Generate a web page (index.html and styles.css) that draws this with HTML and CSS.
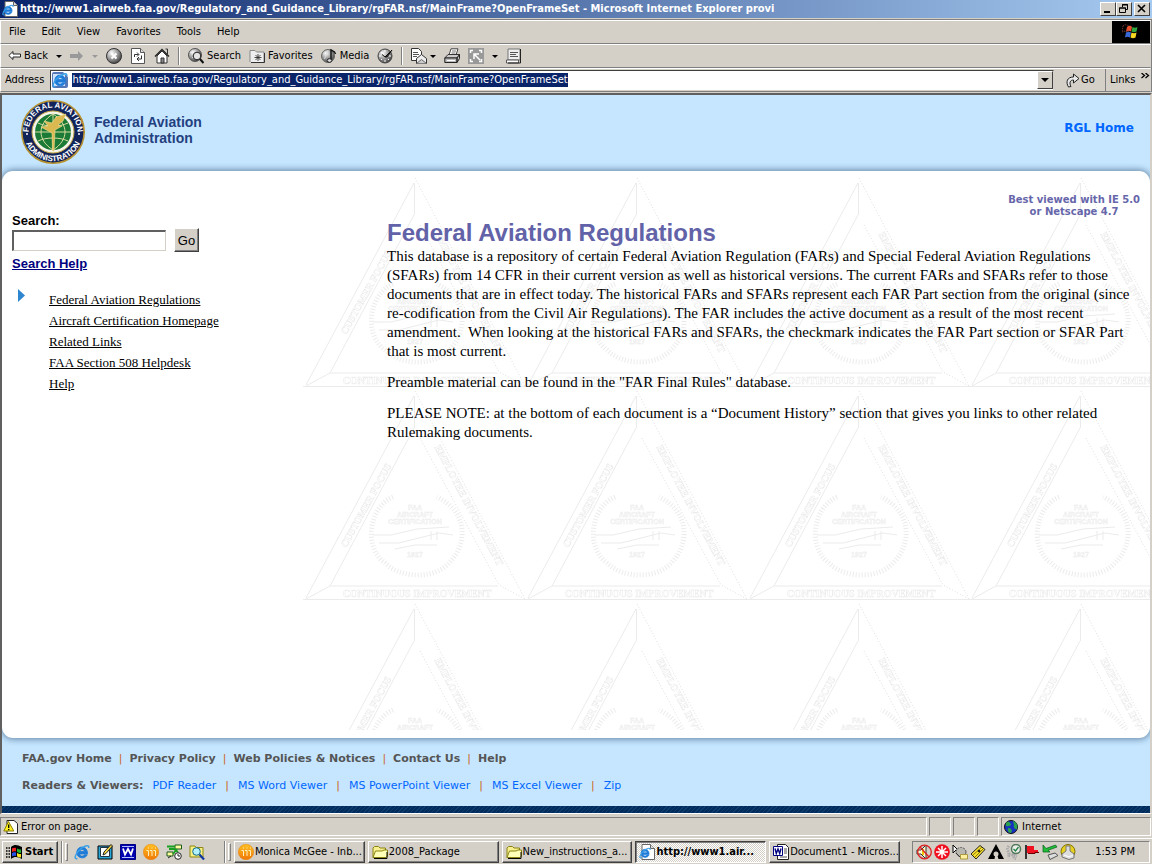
FILE: index.html
```html
<!DOCTYPE html>
<html lang="en">
<head>
<meta charset="utf-8">
<title>Federal Aviation Regulations</title>
<link rel="stylesheet" href="styles.css">
</head>
<body>
<svg class="defs" width="0" height="0" aria-hidden="true">
  <defs>
    <radialGradient id="ball" cx=".35" cy=".3" r=".8"><stop offset="0" stop-color="#fff"/><stop offset=".5" stop-color="#999"/><stop offset="1" stop-color="#333"/></radialGradient>
    <linearGradient id="orange" x2="0" y2="1"><stop offset="0" stop-color="#ffc020"/><stop offset="1" stop-color="#f07808"/></linearGradient>
    <symbol id="ie" viewBox="0 0 16 16">
      <path d="M13.500 10H5.800c.3 2.600 3.600 2.600 4.600.8h2.800c-1.600 4.600-10.400 4.200-10.400-2.300 0-7.500 11.200-7.500 10.700 1.500zM5.800 7.500h4.800c-.3-2.500-4.500-2.500-4.800 0z" fill="#1e7cd8" stroke="#1e7cd8" stroke-width=".8"/>
      <path d="M3.500 14.500C-.5 15.500 1 10.500 5 6.500 9 2.500 15.500-.5 14.800 4" fill="none" stroke="#3aa0e8" stroke-width="1.500"/>
    </symbol>
    <symbol id="iepage" viewBox="0 0 16 16">
      <path d="M3 .5h8.500l4 4v11H3z" fill="#fff" stroke="#666"/><path d="M11.500.5v4h4" fill="#ddd" stroke="#666"/>
      <use href="#ie" x="0" y="3" width="12" height="12"/>
    </symbol>
    <symbol id="folder" viewBox="0 0 16 16">
      <path d="M1 13.500V4l1.500-1.500h4L8 4h5.500v2.500" fill="#f8f090" stroke="#8a8410"/>
      <path d="M1 13.500 3.500 7H10l2-1h3.500v6l-1.500 1.500z" fill="#ffffb8" stroke="#8a8410"/><path d="M2 14.500h13V8" fill="none" stroke="#000"/>
    </symbol>
    <symbol id="word" viewBox="0 0 16 16">
      <path d="M4.500.5h8l3 3v12h-11z" fill="#fff" stroke="#222"/><path d="M11 5h3M11 7h3M11 9h3M7 13h7" stroke="#555"/>
      <path d="M.5 2.500h9v9h-9z" fill="#fff" stroke="#000080"/><path d="m2 4.500 1.300 5L5 5l1.700 4.500L8 4.500" fill="none" stroke="#000080" stroke-width="1.400"/>
    </symbol>
    <symbol id="mail" viewBox="0 0 16 16">
      <circle cx="8" cy="8" r="7.700" fill="url(#orange)" stroke="#e88000" stroke-width=".5"/>
      <path d="M3.500 6.500h2V12M7 6.500h2V12M10.500 6.500h2V12" fill="none" stroke="#fff0c0" stroke-width="1"/><path d="M5 4h1M8.500 4h1M12 4h1" stroke="#fff0c0"/>
    </symbol>
    <symbol id="flag" viewBox="0 0 18 18">
      <path d="M1 3c2-2 4-1 6 0l-1 6c-2-1-4-1-6 0z" fill="none" stroke="#844" stroke-dasharray="1 1"/>
      <path d="M5 4c2-2 4-1 5 0l-1 4.500c-2-1-3-1-5 0z" fill="#e85030"/><path d="M10.500 4c2 1 3 1 5 0l-1 4.500c-2 1-3 1-5 0z" fill="#30a840"/>
      <path d="M4 9.500c2-1 3-1 5 0l-1 5c-2-1-3-1-5 0z" fill="#3868d8"/><path d="M9.500 9.500c2 1 3 1 5 0l-1 5c-2 1-3 1-5 0z" fill="#f8d820"/>
    </symbol>
    <symbol id="caret" viewBox="0 0 6 3"><path d="M0 0h6L3 3z" fill="currentColor"/></symbol>
  </defs>
</svg>

<div class="window">
  <header class="titlebar">
    <svg class="ic16"><use href="#iepage"/></svg>
    <span class="title">http://www1.airweb.faa.gov/Regulatory_and_Guidance_Library/rgFAR.nsf/MainFrame?OpenFrameSet - Microsoft Internet Explorer provi</span>
    <button class="cap" aria-label="Minimize"><svg width="10" height="10"><path d="M1 8h6" stroke="#000" stroke-width="2"/></svg></button>
    <button class="cap" aria-label="Restore"><svg width="10" height="10"><path d="M3.500 3V.5h5v5H7M3 1h6M.5 4v4.500h6V4zM0 4h7" fill="none" stroke="#000"/></svg></button>
    <button class="cap close" aria-label="Close"><svg width="10" height="10"><path d="m1 1 7 7M8 1 1 8" stroke="#000" stroke-width="1.600"/></svg></button>
  </header>

  <div class="chrome">
    <div class="menurow">
      <nav class="menu"><button>File</button><button>Edit</button><button>View</button><button>Favorites</button><button>Tools</button><button>Help</button></nav>
      <div class="throbber"><svg width="18" height="18"><use href="#flag"/></svg></div>
    </div>

    <div class="toolbar">
      <button><svg width="13" height="12" viewBox="0 0 13 12"><path d="M.8 5.500 5 1.500v2.500h7.500v3H5v2.500z" fill="#fff" stroke="#222"/></svg><span>Back</span></button>
      <button class="drop" aria-label="Back history"><svg width="6" height="3"><use href="#caret"/></svg></button>
      <button aria-label="Forward" class="off"><svg width="14" height="12" viewBox="0 0 14 12"><path d="M13 6 8 1v3H0v4h8v3z" fill="#999"/></svg></button>
      <button class="drop off" aria-label="Forward history"><svg width="6" height="3"><use href="#caret"/></svg></button>
      <button aria-label="Stop"><svg class="ic16" viewBox="0 0 16 16"><circle cx="8" cy="8" r="7.500" fill="url(#ball)" stroke="#333"/><path d="m5.500 5.500 5 5m0-5-5 5" stroke="#fff" stroke-width="2"/></svg></button>
      <button aria-label="Refresh"><svg class="ic16" viewBox="0 0 16 16"><path d="M1.500.5h9l4 4v11h-13z" fill="#fff" stroke="#555"/><path d="M10.500.5v4h4" fill="#ddd" stroke="#555"/><path d="M4.500 9V6.500h4M7 4.500l2 2-2 2M11.500 7.500V11h-4M9 9l-2 2 2 2" fill="none" stroke="#333"/></svg></button>
      <button aria-label="Home"><svg class="ic16" viewBox="0 0 16 16"><path d="M3 8v7h10V8L8 3z" fill="#fff" stroke="#333"/><path d="M1 8.500 8 1.500l7 7" fill="none" stroke="#222" stroke-width="1.400"/><path d="M11.500 1h2v5" fill="none" stroke="#333"/><path d="M7 10h3v5H7z" fill="#888" stroke="#333"/></svg></button>
      <i class="sep"></i>
      <button><svg class="ic16" viewBox="0 0 16 16"><circle cx="7" cy="7" r="6.500" fill="url(#ball)" stroke="#555"/><path d="M2 4c3 2 4 0 5 2s-2 3-3 4" stroke="#eee" fill="none"/><circle cx="9" cy="8" r="3.800" fill="#e4e4e4" stroke="#222"/><path d="m12 11 3.500 4" stroke="#111" stroke-width="2"/></svg><span>Search</span></button>
      <button><svg class="ic16" viewBox="0 0 16 16"><path d="M1 14V2.500h5L7.500 4H15v10" fill="#eee" stroke="#888"/><path d="M2 14.500h13.500V5" fill="none" stroke="#333"/><path d="M9 6v7M5.500 9.500h7M6.500 7l5 5m0-5-5 5" stroke="#333" stroke-width=".9"/></svg><span>Favorites</span></button>
      <button><svg class="ic16" viewBox="0 0 16 16"><circle cx="7" cy="8" r="6.500" fill="url(#ball)" stroke="#666"/><path d="M2 5c3 2 3 4 1 6M7 2c0 3-2 3-1 5" stroke="#ddd" fill="none"/><path d="M10 12V2c2 1 4 1 4.500 4" fill="none" stroke="#111" stroke-width="1.400"/><ellipse cx="8.500" cy="12.500" rx="2.300" ry="1.800" fill="#ddd" stroke="#222"/></svg><span>Media</span></button>
      <button aria-label="History"><svg class="ic16" viewBox="0 0 16 16"><circle cx="8" cy="8" r="7" fill="url(#ball)" stroke="#444"/><path d="M8 2v2M8 12v2M2 8h2M12 8h2M4 4l1 1M4 12l1-1M12 12l-1-1" stroke="#fff"/><path d="M8 9 5 6.500M8 9l7-7-5 7z" stroke="#111" fill="#444"/></svg></button>
      <i class="sep"></i>
      <button aria-label="Mail"><svg class="ic16" viewBox="0 0 16 16"><path d="M.5.5h7l3 3v9H.5z" fill="#fff" stroke="#333"/><path d="M2 4.500h5M2 6.500h6M2 8.500h4" stroke="#555"/><path d="m5.500 10.500 5-4 5 4v5h-10z" fill="#eee" stroke="#333"/><path d="m5.500 15.500 5-4 5 4" fill="#ccc" stroke="#666"/></svg><svg width="6" height="3"><use href="#caret"/></svg></button>
      <button aria-label="Print"><svg class="ic16" viewBox="0 0 16 16"><path d="M5 7 7 .8h7L12 7" fill="#fff" stroke="#444"/><path d="M8 3h4M7.500 5h4" stroke="#777"/><path d="M.8 10 4 6.500h11.500L13 10z" fill="#ccc" stroke="#333"/><path d="M.8 10H13v4.500H.8zM13 10l2.500-3.500v4L13 14.500z" fill="#bbb" stroke="#222"/><path d="M3 12.500h8" stroke="#fff"/></svg></button>
      <button aria-label="Edit" class="off"><svg class="ic16" viewBox="0 0 16 16"><path d="M0 0h16v16H0z" fill="#999"/><path d="M2.500 5V2.500H5M11 2.500h2.500V5M13.500 11v2.500H11M5 13.500H2.500V11M6 11V6h5M6 6l6 6" fill="none" stroke="#fff" stroke-width="1.500"/></svg></button>
      <button class="drop" aria-label="Edit options"><svg width="6" height="3"><use href="#caret"/></svg></button>
      <button aria-label="Discuss"><svg class="ic16" viewBox="0 0 16 16"><path d="M2 1h12v11H2z" fill="#eee" stroke="#777"/><path d="M.5 12h12v3H.5z" fill="#fff" stroke="#555"/><path d="M14.500 1v14H2" fill="none" stroke="#222"/><path d="M4 4.500h8M4 6.500h6M4 8.500h8" stroke="#555"/></svg></button>
    </div>

    <form class="address">
      <label for="url">Address</label>
      <div class="combo">
        <svg class="ic16"><rect width="16" height="16" rx="2" fill="#5478b8"/><path d="M11 0h5v5z" fill="#fff"/><rect x="1" y="2" width="12" height="12" fill="#cfe2f8"/><use href="#ie"/></svg>
        <input id="url" type="text" value="http://www1.airweb.faa.gov/Regulatory_and_Guidance_Library/rgFAR.nsf/MainFrame?OpenFrameSet">
        <button type="button" class="combo-btn" aria-label="Show history"><svg width="8" height="4"><use href="#caret"/></svg></button>
      </div>
      <button type="button" class="go"><svg width="14" height="15" viewBox="0 0 14 15"><path d="M2.500 14C-.5 9 1 4 7.500 4V1L13 5.500 7.500 10V7C4 7 3 10 5 13.500z" fill="#e8e8e8" stroke="#222"/></svg>Go</button>
      <button type="button" class="links">Links<svg width="9" height="6"><path d="m.5 0 3 2.500-3 2.500M4.500 0l3 2.500-3 2.500" fill="none" stroke="#000" stroke-width="1.300"/></svg></button>
    </form>
  </div>

  <div class="page">
    <div class="banner">
      <svg class="seal" viewBox="0 0 64 64" role="img" aria-label="Federal Aviation Administration seal">
        <circle cx="32" cy="32" r="31.200" fill="#12235a" stroke="#b8922e" stroke-width="1.600"/>
        <circle cx="32" cy="32" r="21" fill="#f4f4ea" stroke="#c8a848"/><circle cx="32" cy="32" r="18" fill="#1b7a35"/>
        <path d="M32 13v38M14 32h36M17 23c8 4 22 4 30 0M17 41c8-4 22-4 30 0M32 14c-16 10-16 26 0 36M32 14c16 10 16 26 0 36" fill="none" stroke="#d8dca0"/>
        <path d="M31 33 20 27l7-1-4-5 8 2 4-6 10-3-3 7-5 4 4 1-7 4-1 21h-1.500z" fill="#dcb950" stroke="#f2df98" stroke-width=".6"/>
        <path id="top" d="M9.500 41.500A24.400 24.400 0 1 1 54.500 41.500" fill="none"/><path id="bottom" d="M2.800 32A29.200 29.200 0 0 0 61.200 32" fill="none"/>
        <text class="sealtext"><textPath href="#top" startOffset="50%">FEDERAL AVIATION</textPath></text>
        <text class="sealtext"><textPath href="#bottom" startOffset="50%">ADMINISTRATION</textPath></text>
        <circle cx="6" cy="34" r="1" fill="#fff"/><circle cx="58" cy="34" r="1" fill="#fff"/>
      </svg>
      <div class="agency">Federal Aviation<br>Administration</div>
      <a class="home" href="#">RGL Home</a>
    </div>

    <div class="sheet">
      <aside class="side">
        <form>
          <label for="q">Search:</label>
          <div class="query"><input id="q" type="text"><button type="button">Go</button></div>
          <a class="help" href="#">Search Help</a>
        </form>
        <div class="nav">
          <svg width="7" height="13"><path d="M0 0v13l7-6.500z" fill="#2e86d0"/></svg>
          <ul>
            <li><a href="#">Federal Aviation Regulations</a></li>
            <li><a href="#">Aircraft Certification Homepage</a></li>
            <li><a href="#">Related Links</a></li>
            <li><a href="#">FAA Section 508 Helpdesk</a></li>
            <li><a href="#">Help</a></li>
          </ul>
        </div>
      </aside>
      <main class="content">
        <svg class="watermark" aria-hidden="true">
          <defs><pattern id="tile" width="222" height="213" patternUnits="userSpaceOnUse" patternTransform="translate(0 3)">
            <g fill="none" stroke="#ebebeb">
              <path d="M111.500 5v32M111 5 3 207M111 37 27 195h168M3 208l24-13M0 208.500h222"/>
              <path d="m112 0 110 208M117 47l79 147 26 14" stroke="#dedede" stroke-dasharray="1 2"/>
              <path d="M90 106c-24 10-30 50-8 66 16 16 50 16 64 0 20-20 18-52-12-66" stroke-width="5" stroke-dasharray="1 2"/>
              <path d="M70 144h18l26-6 32-2M76 152h20l40-10 14 2M92 158l20-4h22M128 140v9M134 140v9"/>
            </g>
            <g class="marktext">
              <text x="114" y="206">CONTINUOUS IMPROVEMENT</text>
              <text transform="translate(66 116) rotate(-61)">CUSTOMER FOCUS</text>
              <text transform="translate(163 116) rotate(62)">EMPLOYEE INVOLVEMENT</text>
              <g class="marksmall"><text x="112" y="119">FAA</text><text x="112" y="126">AIRCRAFT</text><text x="112" y="133">CERTIFICATION</text><text x="112" y="166">1927</text></g>
            </g>
          </pattern></defs>
          <rect width="100%" height="100%" fill="url(#tile)"/>
        </svg>
        <div class="best">Best viewed with IE 5.0<br>or Netscape 4.7</div>
        <h1>Federal Aviation Regulations</h1>
        <p>This database is a repository of certain Federal Aviation Regulation (FARs) and Special Federal Aviation Regulations (SFARs) from 14 CFR in their current version as well as historical versions. The current FARs and SFARs refer to those documents that are in effect today. The historical FARs and SFARs represent each FAR Part section from the original (since re-codification from the Civil Air Regulations). The FAR includes the active document as a result of the most recent amendment.&nbsp; When looking at the historical FARs and SFARs, the checkmark indicates the FAR Part section or SFAR Part that is most current.</p>
        <p>Preamble material can be found in the "FAR Final Rules" database.</p>
        <p>PLEASE NOTE: at the bottom of each document is a “Document History” section that gives you links to other related Rulemaking documents.</p>
      </main>
    </div>

    <footer class="footer">
      <nav class="primary"><a href="#">FAA.gov Home</a><i>|</i><a href="#">Privacy Policy</a><i>|</i><a href="#">Web Policies &amp; Notices</a><i>|</i><a href="#">Contact Us</a><i>|</i><a href="#">Help</a></nav>
      <nav class="viewers"><b>Readers &amp; Viewers:</b><a href="#">PDF Reader</a><i>|</i><a href="#">MS Word Viewer</a><i>|</i><a href="#">MS PowerPoint Viewer</a><i>|</i><a href="#">MS Excel Viewer</a><i>|</i><a href="#">Zip</a></nav>
    </footer>
    <div class="stripe"></div>
  </div>

  <div class="status">
    <div class="pane message"><svg width="15" height="14" viewBox="0 0 15 14"><path d="M4 .5h7l3.500 3v10H4z" fill="#fff" stroke="#222"/><path d="M5.500 1.500 .8 11h10z" fill="#ffee20" stroke="#8a8000"/><path d="M5.700 4.500v3.500M5.700 9v1.200" stroke="#000" stroke-width="1.300"/></svg>Error on page.</div>
    <div class="pane small"></div><div class="pane small"></div><div class="pane small"></div>
    <div class="pane zone"><svg width="14" height="14" viewBox="0 0 14 14"><circle cx="7" cy="7" r="6.500" fill="#1830c0" stroke="#111"/><path d="M2 3c3-3 4 0 5 1S4 7 2 6zM9 1c4 1 5 5 4 8-2 1-4-2-3-4zM4 8c3 0 5 2 3 5-2 0-4-2-3-5z" fill="#28a050"/></svg>Internet</div>
  </div>
</div>

<div class="taskbar">
  <button class="start"><svg width="18" height="16" viewBox="0 0 18 16"><path d="M0 4h5M0 7h5M0 10h5M0 13h4" stroke="#000" stroke-width="1.500" stroke-dasharray="1.500 1"/><path d="M5 3c4-3 6-2 11 0v12c-4-2-7-3-11 0z" fill="#000"/><path d="M6 4.500c1-1 3-1 4-.5v3.500c-1-.5-3-.5-4 .5z" fill="#f02020"/><path d="M11 4.500c1 .5 2 1 4 1V9c-2 0-3-.5-4-1z" fill="#20b030"/><path d="M6 9c1-1 3-1 4-.5V12c-1-.5-3-.5-4 .5z" fill="#2850e8"/><path d="M11 9c1 .5 2 1 4 1v3.500c-2 0-3-.5-4-1z" fill="#f8e020"/></svg>Start</button>
  <i class="rail"></i><i class="grip"></i>
  <div class="quick">
    <button aria-label="Internet Explorer"><svg class="ic16"><use href="#ie"/></svg></button>
    <button aria-label="Show Desktop"><svg class="ic16" viewBox="0 0 16 16"><path d="M1 2h14v13H1z" fill="#28a8d8" stroke="#000"/><path d="M3.500 3.500h9v9h-9z" fill="#fff" stroke="#234"/><path d="m6 11 1-3 7-7.500L15.500 2 9 9.500z" fill="#f8d840" stroke="#222"/></svg></button>
    <button aria-label="Word"><svg class="ic16" viewBox="0 0 16 16"><path d="M.5.500h15v15H.5z" fill="#0000b0" stroke="#000080"/><path d="M2 2.500h12M2 13.500h12" stroke="#b0c0ff"/><path d="m3 4.500 2 6L8 5l3 5.500 2-6" fill="none" stroke="#fff" stroke-width="1.800"/></svg></button>
    <button aria-label="GroupWise"><svg class="ic16"><use href="#mail"/></svg></button>
    <button aria-label="Network"><svg class="ic16" viewBox="0 0 16 16"><path d="M9 1h6.500v4H9zM1 8h6v4H1z" fill="#ffffa0" stroke="#185818"/><path d="M1 2.500h8M3 5h5l4 3M7 10l4-5" stroke="#18a020" stroke-width="1.800" fill="none"/><circle cx="12" cy="12" r="3.300" fill="#fff" stroke="#222"/><path d="M12 10v2h2M2 14l3-2" stroke="#222" fill="none"/></svg></button>
    <button aria-label="Find"><svg class="ic16" viewBox="0 0 16 16"><path d="M1 13V2h5l1 1.500h7V13z" fill="#f8f080" stroke="#908810"/><circle cx="7.500" cy="7.500" r="3.800" fill="#b0f0ff" stroke="#106888"/><path d="m10.500 10.500 4.500 5" stroke="#1038a0" stroke-width="2.200"/></svg></button>
  </div>
  <i class="rail"></i><i class="grip"></i>
  <div class="tasks">
    <button><svg class="ic16"><use href="#mail"/></svg>Monica McGee - Inb...</button>
    <button><svg class="ic16"><use href="#folder"/></svg>2008_Package</button>
    <button><svg class="ic16"><use href="#folder"/></svg>New_instructions_a...</button>
    <button class="active"><svg class="ic16"><use href="#iepage"/></svg>http://www1.air...</button>
    <button><svg class="ic16"><use href="#word"/></svg>Document1 - Micros...</button>
  </div>
  <div class="tray">
    <svg class="ic16" viewBox="0 0 16 16"><path d="M1 6h4l5-5v14l-5-5H1z" fill="#fff8d0" stroke="#333"/><path d="M7 5v6" stroke="#f0c800" stroke-width="2"/><circle cx="8.500" cy="8" r="6.800" fill="none" stroke="#e02020" stroke-width="1.300"/><path d="m4 3 9 10" stroke="#e02020" stroke-width="1.300"/></svg>
    <svg class="ic16" viewBox="0 0 16 16"><circle cx="8" cy="8" r="7.800" fill="#f01020"/><path d="M8 2v12M2 8h12M4 4l8 8M12 4l-8 8" stroke="#fff" stroke-width="1.500"/></svg>
    <svg class="ic16" viewBox="0 0 16 16"><path d="M1 1v8l3-3 3 1z" fill="#fff" stroke="#000"/><ellipse cx="9" cy="8" rx="5" ry="4.500" fill="#b8b8b0" stroke="#555" stroke-dasharray="2 1"/><path d="m4 9 5 5" stroke="#333"/><path d="M8.500 10.500h7v4.500h-7z" fill="#fff0a0" stroke="#aa9940"/></svg>
    <svg class="ic16" viewBox="0 0 16 16"><path d="M1 10 10 1.500l5 4L6 15z" fill="#f8e030" stroke="#222"/><path d="m3 11 9-8M5 13l8-8" stroke="#8a7800"/><circle cx="9" cy="7" r="1.300" fill="#222"/></svg>
    <svg class="ic16" viewBox="0 0 16 16"><path d="M8 0 0 15h6.500l1-5 1.500.500L10.500 15H16z" fill="#000"/><circle cx="8" cy="10" r="2.500" fill="#d4d0c8"/></svg>
    <svg class="ic16" viewBox="0 0 16 16"><path d="M3 2c-4 4 2 6-1 12M6 9c5 0-1 5 4 6M3 10l8 2" fill="none" stroke="#aaa" stroke-width="3" stroke-dasharray="1.500 1"/><circle cx="10" cy="5" r="4.500" fill="#eee" stroke="#507858" stroke-width="1.500"/><path d="m7.500 5 2 2 3-4" fill="none" stroke="#208040" stroke-width="1.300"/></svg>
    <svg class="ic16" viewBox="0 0 16 16"><path d="M2 1v14" stroke="#000" stroke-width="1.500"/><path d="M3 2h7v4h4v3H3z" fill="#f01020"/><path d="M4 9.500h7v-1h4" stroke="#600" fill="none"/></svg>
    <svg class="ic16" viewBox="0 0 16 16"><path d="m6 11 7-2 3 2.500-8 4z" fill="#ddd" stroke="#555"/><path d="M1 1v7h7L6 6.300 15 3 13.500 1 4 4.500z" fill="#20c038" stroke="#085818" stroke-width=".7"/></svg>
    <svg class="ic16" viewBox="0 0 16 16"><circle cx="8" cy="7.500" r="7" fill="#e8d020" stroke="#807000"/><path d="M6 7V2h4v5l4 3v4l-5 1.500L2 13v-3z" fill="#ddd" stroke="#777"/><path d="m4 11 5 2 4-2" stroke="#fff" fill="none"/></svg>
    <time>1:53 PM</time>
  </div>
</div>
</body>
</html>
```
FILE: styles.css
```css
* { box-sizing: border-box; }
body {
  margin: 0;
  min-height: 100vh;
  display: flex;
  flex-direction: column;
  background: #d4d0c8;
  color: #000;
  font: 11px/14px "DejaVu Sans Condensed", "DejaVu Sans", sans-serif;
}
button, input { font: inherit; color: inherit; margin: 0; padding: 0; border: 0; background: none; }
svg { flex: none; display: block; }
i { font-style: normal; }
.defs { position: absolute; }
.ic16 { width: 16px; height: 16px; }
.window { flex: 1; display: flex; flex-direction: column; }

/* title bar */
.titlebar {
  display: flex;
  align-items: center;
  height: 18px;
  padding: 0 2px;
  color: #fff;
  font-weight: bold;
  background: linear-gradient(90deg, #0a246a, #a6caf0);
}
.title { flex: 1; min-width: 0; padding-left: 2px; overflow: hidden; white-space: nowrap; }
.cap {
  display: grid;
  place-items: center;
  width: 16px;
  height: 14px;
  background: #d4d0c8;
  border: 1px solid;
  border-color: #fff #404040 #404040 #fff;
}
.close { margin-left: 2px; }

/* menu, toolbar and address rows */
.chrome { margin-top: 1px; border-top: 1px solid #808080; border-right: 1px solid #808080; }
.menurow, .toolbar, .address {
  display: flex;
  align-items: center;
  height: 24px;
  border: 1px solid;
  border-color: #fff #d4d0c8 #808080 #fff;
}
.menu { flex: 1; display: flex; gap: 16px; padding-left: 8px; }
.throbber { display: grid; place-items: center; width: 38px; height: 22px; background: #000; }
.toolbar { gap: 8px; padding-left: 7px; }
.toolbar button { display: flex; align-items: center; gap: 3px; }
.toolbar .off { color: #999; }
.sep { width: 2px; height: 18px; border-left: 1px solid #808080; border-right: 1px solid #fff; }
.address label { padding: 0 6px 0 4px; }
.combo {
  flex: 1;
  min-width: 0;
  display: flex;
  align-items: center;
  gap: 4px;
  height: 21px;
  padding-left: 1px;
  background: #fff;
  border: 1px solid;
  border-color: #404040 #d4d0c8 #d4d0c8 #404040;
}
.combo input { field-sizing: content; height: 14px; background: #0a246a; color: #fff; }
.combo-btn {
  display: grid;
  place-items: center;
  width: 16px;
  height: 18px;
  margin-left: auto;
  background: #d4d0c8;
  border: 1px solid;
  border-color: #fff #404040 #404040 #fff;
}
.go { display: flex; align-items: center; gap: 1px; width: 51px; padding-left: 12px; }
.links { display: flex; gap: 6px; width: 45px; height: 22px; padding: 4px 0 0 4px; border-left: 1px solid #808080; }

/* web page */
.page {
  flex: 1;
  display: flex;
  flex-direction: column;
  margin-top: 1px;
  border: 2px solid;
  border-color: #606060 #d4d0c8 #fff #606060;
  border-bottom-width: 1px;
  background: #c6e6ff;
}
.banner { display: flex; align-items: center; gap: 9px; height: 76px; padding: 0 16px 2px 19px; }
.seal { width: 64px; height: 64px; }
.sealtext { fill: #fff; font: bold 8px "Liberation Sans", sans-serif; text-anchor: middle; }
.agency { color: #23407f; font: bold 14px/16px "Liberation Sans", Arial, sans-serif; padding-bottom: 4px; }
.home { margin-left: auto; padding-bottom: 8px; color: #0066ff; font: bold 12px/16px "DejaVu Sans", Verdana, sans-serif; text-decoration: none; }
.sheet {
  flex: 1;
  display: flex;
  overflow: hidden;
  isolation: isolate;
  background: #fff;
  border-radius: 11px;
  box-shadow: 0 0 7px 1px #5f80a0;
  clip-path: inset(-8px 0);
}
.side { width: 301px; padding: 42px 0 0 10px; font: bold 13px/15px "Liberation Sans", Arial, sans-serif; }
.side label { display: block; }
.query { display: flex; align-items: center; gap: 8px; margin-bottom: 4px; }
.query input {
  width: 154px;
  height: 21px;
  background: #fff;
  border: 2px solid;
  border-color: #606060 #d4d0c8 #d4d0c8 #606060;
  border-width: 2px 1px 1px 2px;
}
.query button {
  width: 25px;
  height: 24px;
  background: #d4d0c8;
  border: 1px solid;
  border-color: #fff #404040 #404040 #fff;
  box-shadow: inset -1px -1px #808080;
  font-weight: normal;
}
.help { color: #000080; }
.nav { display: flex; gap: 24px; padding: 18px 0 0 6px; }
.nav ul { list-style: none; margin: 0; padding: 0; font: 13px/21px "Liberation Serif", "Times New Roman", serif; }
.nav a { color: #000; }
.content {
  flex: 1;
  min-width: 0;
  position: relative;
  padding: 23px 10px 10px 84px;
  font: 15px/19px "Liberation Serif", "Times New Roman", serif;
}
.watermark { position: absolute; inset: 4px 0 8px; width: 100%; height: calc(100% - 12px); z-index: -1; }
.marktext { fill: none; stroke: #ebebeb; stroke-width: 0.5px; font: bold 10px "Liberation Serif", serif; text-anchor: middle; }
.marksmall { font: bold 7px "Liberation Sans", sans-serif; }
.best {
  width: fit-content;
  margin-left: auto;
  color: #6666aa;
  font: bold 10px/12px "DejaVu Sans", Verdana, sans-serif;
  text-align: center;
}
h1 { margin: 0; color: #6262a8; font: bold 24px/29px "Liberation Sans", Arial, sans-serif; }
p { margin: 0 0 12px; }
.footer { padding: 13px 20px; color: #555; font: 11px/15px "DejaVu Sans", Verdana, sans-serif; }
.footer nav { display: flex; }
.footer a { text-decoration: none; }
.footer i { color: #cc6622; }
.primary { gap: 7px; font-weight: bold; }
.primary i { font-weight: normal; }
.primary a { color: #555; }
.viewers { gap: 9px; padding-top: 12px; }
.viewers a { color: #0066ff; }
.stripe { height: 7px; background: repeating-linear-gradient(135deg, #002c5c 0 2px, #0c3c70 2px 3px); }

/* status bar */
.status { display: flex; gap: 2px; height: 24px; padding: 3px 1px 2px 0; }
.pane { display: flex; align-items: center; border: 1px solid; border-color: #808080 #fff #fff #808080; }
.message { flex: 1; gap: 3px; padding-left: 2px; }
.small { width: 22px; }
.zone { width: 150px; gap: 4px; padding-left: 2px; }

/* taskbar */
.taskbar { display: flex; align-items: center; height: 26px; padding: 0 2px; border-top: 1px solid #fff; }
.start, .tasks button {
  display: flex;
  align-items: center;
  height: 22px;
  padding-left: 3px;
  border: 1px solid;
  border-color: #fff #404040 #404040 #fff;
  box-shadow: inset -1px -1px #808080;
}
.start { width: 56px; gap: 1px; font-weight: bold; }
.rail { width: 2px; height: 22px; margin-left: 3px; border-left: 1px solid #808080; border-right: 1px solid #fff; }
.grip { width: 3px; height: 18px; margin-left: 2px; border: 1px solid; border-color: #fff #808080 #808080 #fff; }
.quick { display: flex; gap: 7px; width: 153px; padding-left: 6px; }
.tasks { flex: 1; min-width: 0; display: flex; gap: 3px; padding: 0 12px 0 3px; }
.tasks button { flex: 1 1 0; min-width: 0; overflow: hidden; white-space: nowrap; gap: 1px; }
.tasks .active {
  font-weight: bold;
  border-color: #404040 #fff #fff #404040;
  box-shadow: inset 1px 1px #808080;
  background: repeating-conic-gradient(#fff 0 25%, #d4d0c8 0 50%) 0 0 / 2px 2px;
}
.tray { display: flex; align-items: center; gap: 2px; width: 238px; height: 22px; padding: 0 14px 0 3px; border: 1px solid; border-color: #808080 #fff #fff #808080; }
.tray time { margin-left: auto; }
```
